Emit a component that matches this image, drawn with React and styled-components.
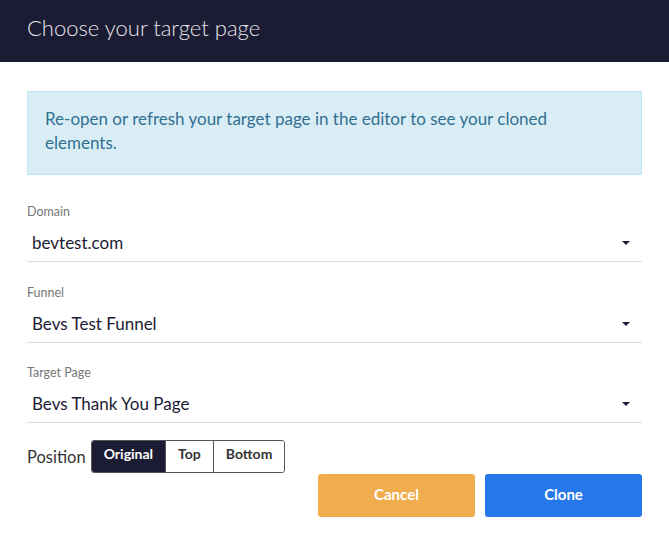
import styled, { createGlobalStyle } from "styled-components";

const GlobalStyle = createGlobalStyle`
  html, body {
    margin: 0;
    padding: 0;
    background: #ffffff;
  }
  body {
    font-family: "Lato", "Open Sans", sans-serif;
    color: #1b1b33;
  }
  * {
    box-sizing: border-box;
  }
`;

const fields = [
  { label: "Domain", value: "bevtest.com" },
  { label: "Funnel", value: "Bevs Test Funnel" },
  { label: "Target Page", value: "Bevs Thank You Page" },
];

const positions = ["Original", "Top", "Bottom"];

const App = () => {
  return (
    <>
      <GlobalStyle />
      <Modal>
        <Header>
          <Title>Choose your target page</Title>
        </Header>
        <Body>
          <Alert>
            Re-open or refresh your target page in the editor to see your cloned
            elements.
          </Alert>
          <Fields>
            {fields.map((field) => (
              <Field key={field.label}>
                <Label>{field.label}</Label>
                <Select>
                  <span>{field.value}</span>
                  <Caret />
                </Select>
              </Field>
            ))}
          </Fields>
          <PositionRow>
            <PositionLabel>Position</PositionLabel>
            <Segmented>
              {positions.map((p) => (
                <Segment key={p} active={p === "Original"}>
                  {p}
                </Segment>
              ))}
            </Segmented>
          </PositionRow>
          <Actions>
            <Button variant="cancel">Cancel</Button>
            <Button variant="clone">Clone</Button>
          </Actions>
        </Body>
      </Modal>
    </>
  );
};

export default App;

const Modal = styled.div`
  width: 669px;
  min-height: 541px;
  background: #fff;
`;

const Header = styled.div`
  height: 62px;
  background: #1b1b33;
  display: flex;
  align-items: center;
  padding: 0 27px 8px;
`;

const Title = styled.h1`
  margin: 0;
  font-weight: 300;
  font-size: 22px;
  color: #e6e6ea;
`;

const Body = styled.div`
  padding: 29px 27px 24px;
  display: flex;
  flex-direction: column;
`;

const Alert = styled.div`
  background: #d9edf7;
  border: 1px solid #bce8f1;
  color: #31708f;
  font-size: 17px;
  line-height: 24px;
  padding: 15px 40px 19px 17px;
`;

const Fields = styled.div`
  display: flex;
  flex-direction: column;
  gap: 22.5px;
  margin-top: 29px;
`;

const Field = styled.div`
  display: flex;
  flex-direction: column;
`;

const Label = styled.label`
  font-size: 12.5px;
  line-height: 16px;
  color: #777;
`;

const Select = styled.div`
  margin-top: 11px;
  display: flex;
  align-items: center;
  justify-content: space-between;
  padding: 0 12px 6px 5px;
  border-bottom: 1px solid #dcdcdc;
  font-size: 17px;
  line-height: 24px;
  color: #1b1b33;
`;

const Caret = styled.span`
  width: 0;
  height: 0;
  border-top: 4px solid #1b1b33;
  border-left: 4px solid transparent;
  border-right: 4px solid transparent;
`;

const PositionRow = styled.div`
  display: flex;
  align-items: center;
  gap: 5px;
  margin-top: 17px;
`;

const PositionLabel = styled.span`
  font-size: 16.5px;
  color: #333;
`;

const Segmented = styled.div`
  display: flex;
  border: 1px solid #555;
  border-radius: 3px;
  overflow: hidden;
  height: 33px;
`;

const Segment = styled.button`
  border: none;
  border-left: 1px solid #555;
  &:first-child {
    border-left: none;
  }
  background: ${(p) => (p.active ? "#1b1b33" : "#fff")};
  color: ${(p) => (p.active ? "#fff" : "#333")};
  font-family: inherit;
  font-size: 14px;
  font-weight: 700;
  padding: 0 12px 7px;
  cursor: pointer;
`;

const Actions = styled.div`
  display: flex;
  justify-content: flex-end;
  gap: 10px;
  margin-top: 1px;
`;

const Button = styled.button`
  width: 157px;
  height: 43px;
  border: none;
  border-radius: 3px;
  background: ${(p) => (p.variant === "cancel" ? "#f0ad4e" : "#2577ea")};
  color: #fff;
  font-family: inherit;
  font-size: 15px;
  font-weight: 700;
  padding-bottom: 4px;
  cursor: pointer;
`;
